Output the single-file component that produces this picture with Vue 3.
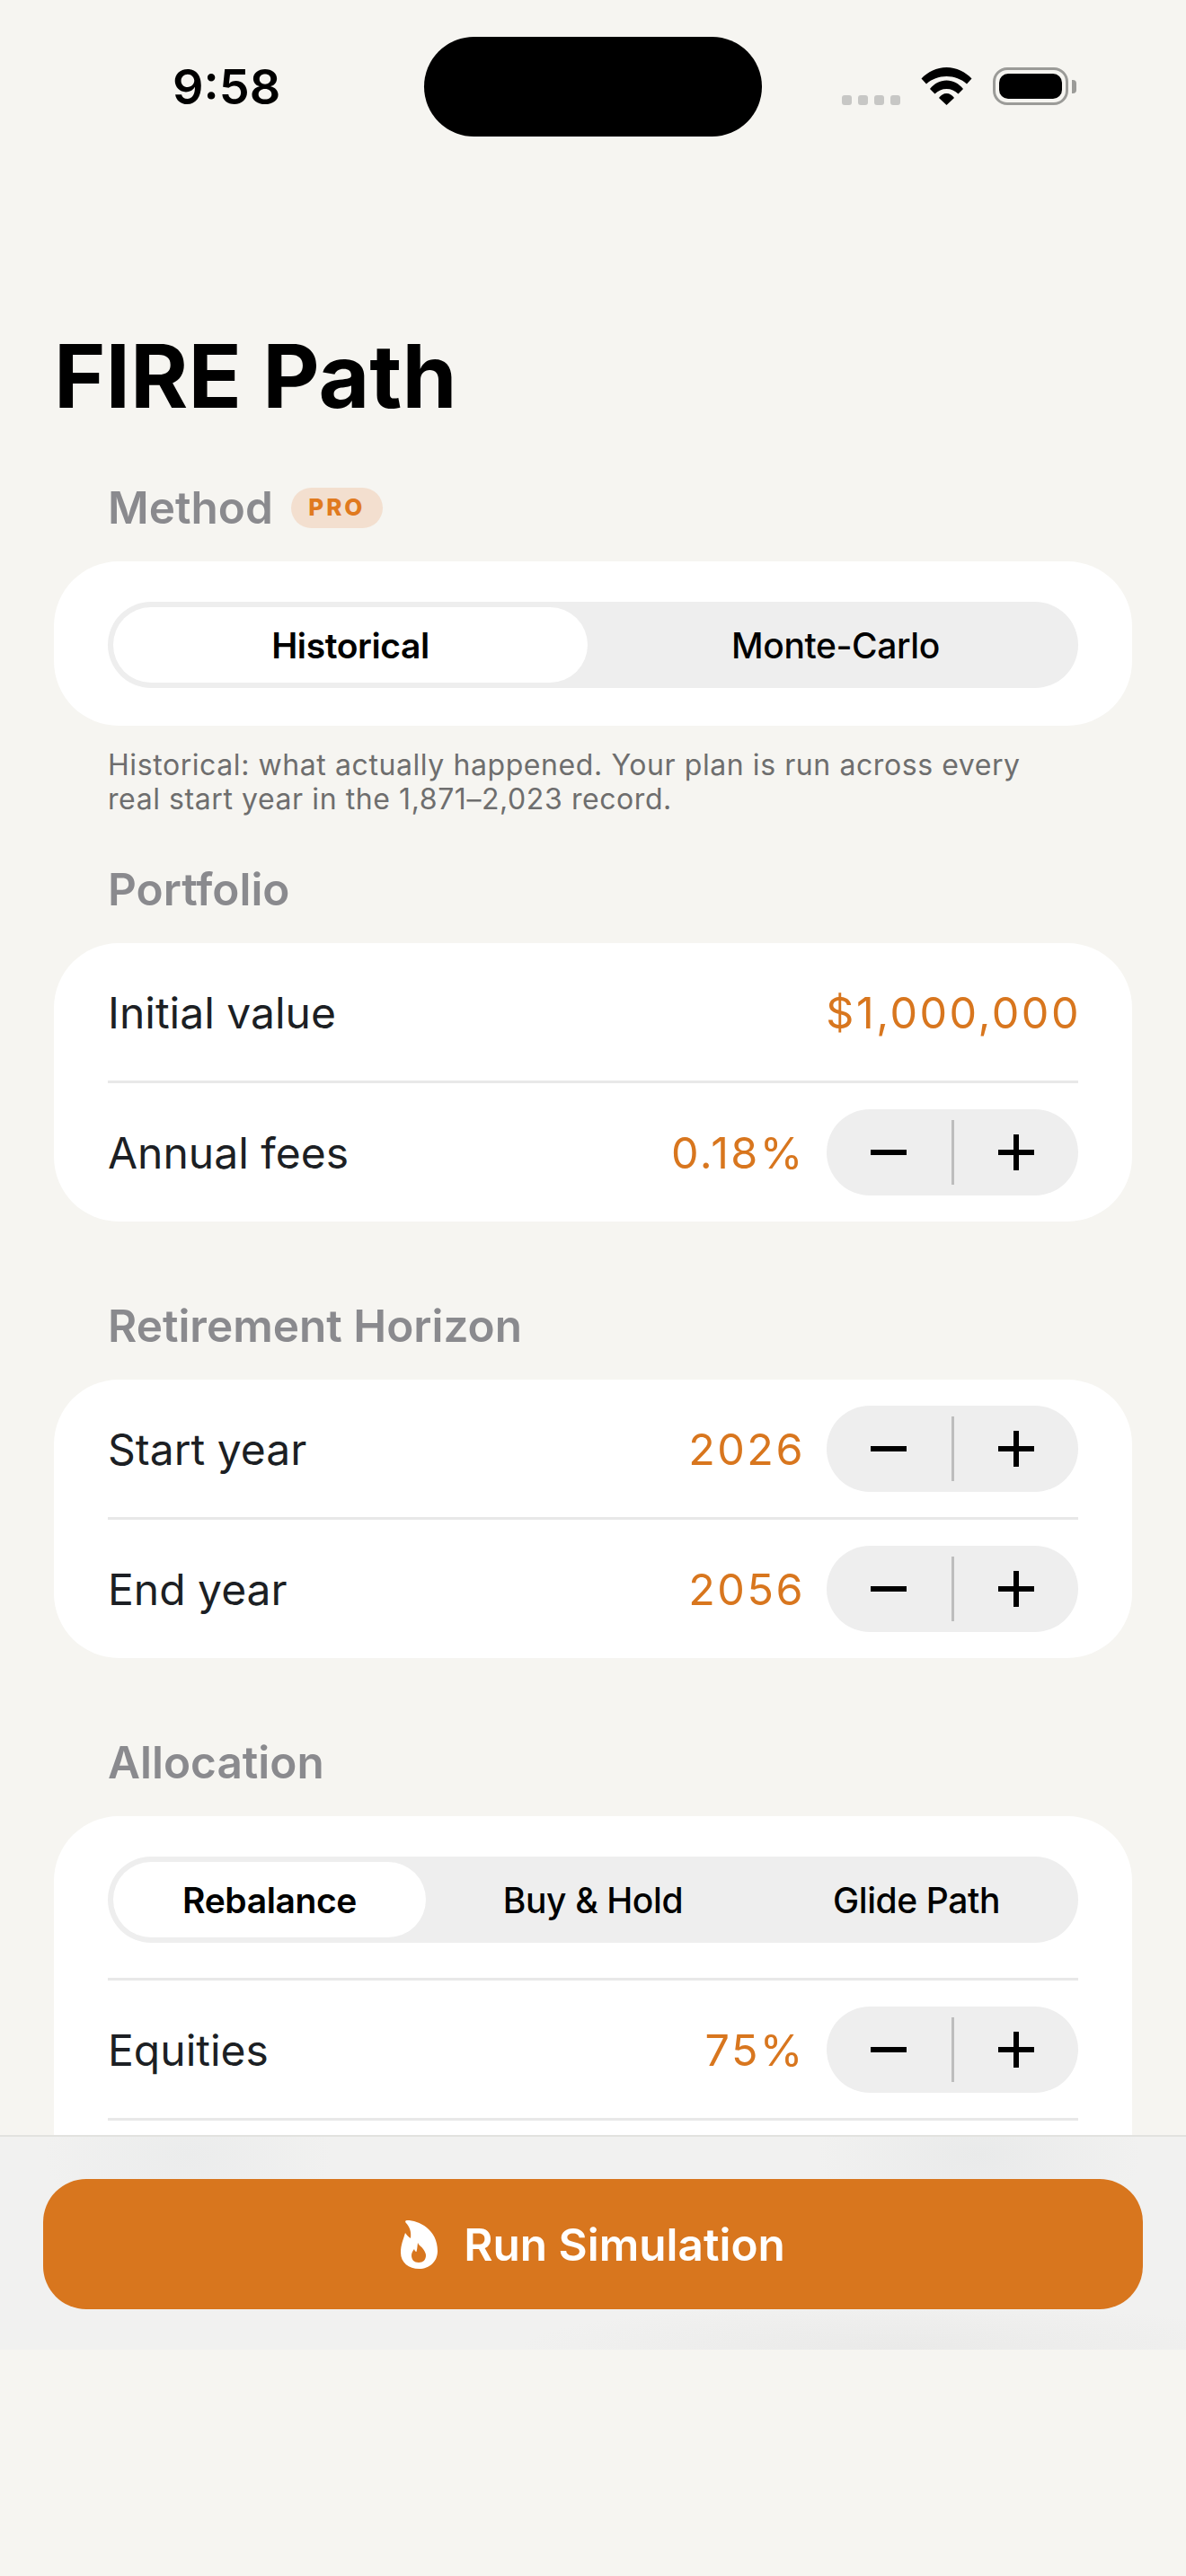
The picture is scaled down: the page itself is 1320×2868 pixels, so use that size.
<script setup>
const horizon = [
  { label: 'Start year', value: '2026' },
  { label: 'End year', value: '2056' },
];
const methods = ['Historical', 'Monte-Carlo'];
const allocModes = ['Rebalance', 'Buy & Hold', 'Glide Path'];
</script>

<template>
  <div class="screen">
    <div class="scroll">
      <header class="status">
        <div class="time">9:58</div>
        <div class="island"></div>
        <div class="status-icons">
          <div class="signal"><i v-for="n in 4" :key="n"></i></div>
          <svg class="wifi" viewBox="0 0 57 42" aria-hidden="true">
            <path d="M.5 12.5C7.5 5 17.5 0 28.5 0s21 5 28 12.5L51 18.5C45 13 37 10 28.5 10S12 13 6 18.5Z"/>
            <path d="M10 24c5-6 11-9.500 18.500-9.500S42 18 47 24l-5.500 5.500C38 26 33.500 24 28.500 24s-9.500 2-13 5.500Z"/>
            <path d="M20 34c2-3 5-5 8.500-5s6.500 2 8.500 5l-8.500 8Z"/>
          </svg>
          <div class="battery"><div class="battery-body"><span></span></div><div class="battery-nub"></div></div>
        </div>
      </header>

      <main class="content">
        <h1>FIRE Path</h1>

        <div class="section-label">Method <span class="pro">PRO</span></div>
        <section class="card card-seg">
          <div class="segmented">
            <div v-for="(m, i) in methods" :key="m" class="seg" :class="{ active: i === 0 }"><span>{{ m }}</span></div>
          </div>
        </section>
        <p class="note">Historical: what actually happened. Your plan is run across every<br>real start year in the 1,871–2,023 record.</p>

        <div class="section-label first-after-note">Portfolio</div>
        <section class="card">
          <div class="row">
            <span class="row-label">Initial value</span>
            <span class="row-value">$1,000,000</span>
          </div>
          <div class="divider"></div>
          <div class="row">
            <span class="row-label">Annual fees</span>
            <div class="row-right">
              <span class="row-value">0.18%</span>
              <div class="stepper">
                <button><svg viewBox="0 0 40 40"><path d="M1 20h38"/></svg></button>
                <i></i>
                <button><svg viewBox="0 0 40 40"><path d="M1 20h38M20 1v38"/></svg></button>
              </div>
            </div>
          </div>
        </section>

        <div class="section-label spaced">Retirement Horizon</div>
        <section class="card">
          <template v-for="(r, i) in horizon" :key="r.label">
            <div v-if="i" class="divider"></div>
            <div class="row">
              <span class="row-label">{{ r.label }}</span>
              <div class="row-right">
                <span class="row-value">{{ r.value }}</span>
                <div class="stepper">
                  <button><svg viewBox="0 0 40 40"><path d="M1 20h38"/></svg></button>
                  <i></i>
                  <button><svg viewBox="0 0 40 40"><path d="M1 20h38M20 1v38"/></svg></button>
                </div>
              </div>
            </div>
          </template>
        </section>

        <div class="section-label spaced">Allocation</div>
        <section class="card card-alloc">
          <div class="segmented">
            <div v-for="(m, i) in allocModes" :key="m" class="seg" :class="{ active: i === 0 }"><span>{{ m }}</span></div>
          </div>
          <div class="divider alloc-div"></div>
          <div class="row">
            <span class="row-label">Equities</span>
            <div class="row-right">
              <span class="row-value">75%</span>
              <div class="stepper">
                <button><svg viewBox="0 0 40 40"><path d="M1 20h38"/></svg></button>
                <i></i>
                <button><svg viewBox="0 0 40 40"><path d="M1 20h38M20 1v38"/></svg></button>
              </div>
            </div>
          </div>
          <div class="divider"></div>
          <div class="row"></div>
        </section>
      </main>
    </div>

    <footer class="footer">
      <button class="run">
        <svg class="flame" viewBox="0 0 41 54" aria-hidden="true">
          <path fill-rule="evenodd" d="M7 0c13 0 34 10 34 34 0 12-9 20-20.500 20C9 54 0 47 0 36c0-9 3-15 5-22 1.500 2 3 4 6 6 1-7-1-13-5.500-17.500C4.500 1.200 5.500 0 7 0ZM19 25c1 3 4 4 6 7s3 5 3 7c0 5-3 8-8 8s-8-3-8-8c0-3 1.500-5 3-7 .5 2 1.500 3 2.500 3 1-3 1-7 1.500-10Z"/>
        </svg>
        <span>Run Simulation</span>
      </button>
    </footer>
  </div>
</template>

<style scoped>
.screen {
  height: 2868px;
  width: 1320px;
  overflow: hidden;
  background: #f6f5f1;
  font-family: Inter, "Noto Sans", sans-serif;
  color: #1c1f24;
}

.scroll {
  height: 2377px;
  overflow: hidden;
}

.status {
  display: grid;
  grid-template-columns: 472px 376px 1fr;
  align-items: center;
  padding-top: 41px;
}

.time {
  padding-left: 192px;
  font-size: 54px;
  font-weight: 600;
  color: #000;
  line-height: 60px;
}

.island {
  height: 111px;
  border-radius: 56px;
  background: #000;
}

.status-icons {
  display: flex;
  align-items: flex-end;
  padding-left: 89px;
  height: 42px;
  margin-top: -1px;
}

.signal {
  display: flex;
  gap: 7px;
  margin-right: 23px;
}

.signal i {
  width: 11px;
  height: 11px;
  border-radius: 3px;
  background: #c7c7c5;
}

.wifi {
  width: 57px;
  height: 42px;
  margin-right: 23px;
}

.battery {
  display: flex;
  align-items: center;
  gap: 4px;
}

.battery-body {
  box-sizing: border-box;
  width: 84px;
  height: 42px;
  padding: 4px;
  border: 3px solid #9b9b98;
  border-radius: 16px;
}

.battery-body span {
  display: block;
  height: 100%;
  border-radius: 10px;
  background: #000;
}

.battery-nub {
  width: 5px;
  height: 15px;
  border-radius: 0 4px 4px 0;
  background: #9b9b98;
}

.content {
  padding: 0 60px;
}

h1 {
  margin: 0 0 56px;
  padding-top: 207px;
  height: 120px;
  font-size: 98px;
  line-height: 120px;
  font-weight: 700;
  color: #000;
  box-sizing: content-box;
}

.section-label {
  display: flex;
  align-items: center;
  gap: 20px;
  height: 60px;
  margin-bottom: 30px;
  padding-left: 60px;
  font-size: 49.500px;
  font-weight: 600;
  line-height: 60px;
  color: #8a8a8e;
}

.first-after-note {
  margin-top: 51px;
}

.spaced {
  margin-top: 86px;
}

.pro {
  display: inline-flex;
  align-items: center;
  justify-content: center;
  width: 102px;
  height: 45px;
  border-radius: 23px;
  background: #f3dfcf;
  color: #e07a1f;
  font-size: 26px;
  font-weight: 800;
  letter-spacing: 3px;
}

.card {
  padding: 0 60px 1px;
  border-radius: 72px;
  background: #fff;
}

.card-seg {
  padding-top: 45px;
  padding-bottom: 42px;
}

.card-alloc {
  padding-top: 45px;
}

.segmented {
  display: flex;
  height: 96px;
  border-radius: 48px;
  background: #eeeeee;
}

.seg {
  box-sizing: border-box;
  flex: 1;
  padding: 6px;
}

.seg span {
  display: flex;
  align-items: center;
  justify-content: center;
  height: 100%;
  border-radius: 42px;
  font-size: 39px;
  font-weight: 500;
  letter-spacing: -0.4px;
  color: #000;
}

.seg.active span {
  background: #fff;
  font-weight: 600;
}

.note {
  margin: 25px 0 0;
  padding: 0 60px;
  font-size: 32px;
  line-height: 38px;
  letter-spacing: 0.58px;
  color: #6e6e6e;
}

.divider {
  height: 3px;
  background: #e8e8e8;
}

.alloc-div {
  margin-top: 39px;
}

.row {
  display: flex;
  align-items: center;
  justify-content: space-between;
  height: 153px;
}

.row-label {
  padding-top: 2px;
  font-size: 48px;
  color: #1c1f24;
}

.row-value {
  padding-top: 2px;
  font-size: 48.500px;
  letter-spacing: 2.500px;
  margin-right: -3px;
  color: #d8761e;
}

.row-right {
  display: flex;
  align-items: center;
  gap: 27px;
}

.stepper {
  display: flex;
  align-items: center;
  width: 280px;
  height: 96px;
  border-radius: 48px;
  background: #eeeeee;
}

.stepper button {
  flex: 1;
  height: 100%;
  padding: 0;
  border: 0;
  background: none;
  display: flex;
  align-items: center;
  justify-content: center;
}

.stepper svg {
  width: 40px;
  height: 40px;
  fill: none;
  stroke: #000;
  stroke-width: 6;
  stroke-linecap: round;
}

.stepper i {
  width: 3px;
  height: 72px;
  background: #bdbdbd;
}

.footer {
  box-sizing: border-box;
  height: 239px;
  padding: 47px 48px 0;
  border-top: 2px solid #e2e2df;
  background:
    radial-gradient(ellipse 160px 90px at 210px 20px, #ebecec, transparent),
    radial-gradient(ellipse 180px 90px at 1090px 20px, #e9eaea, transparent),
    radial-gradient(ellipse 420px 50px at 1000px 235px, #eaeae9, transparent),
    #f1f1f0;
}

.run {
  display: flex;
  align-items: center;
  justify-content: center;
  gap: 29px;
  width: 100%;
  height: 145px;
  padding: 0;
  border: 0;
  border-radius: 48px;
  background: #d8761e;
  color: #fff;
  font-family: inherit;
  font-size: 49.500px;
  font-weight: 600;
}

.flame {
  width: 41px;
  height: 54px;
  fill: #fff;
}
</style>
